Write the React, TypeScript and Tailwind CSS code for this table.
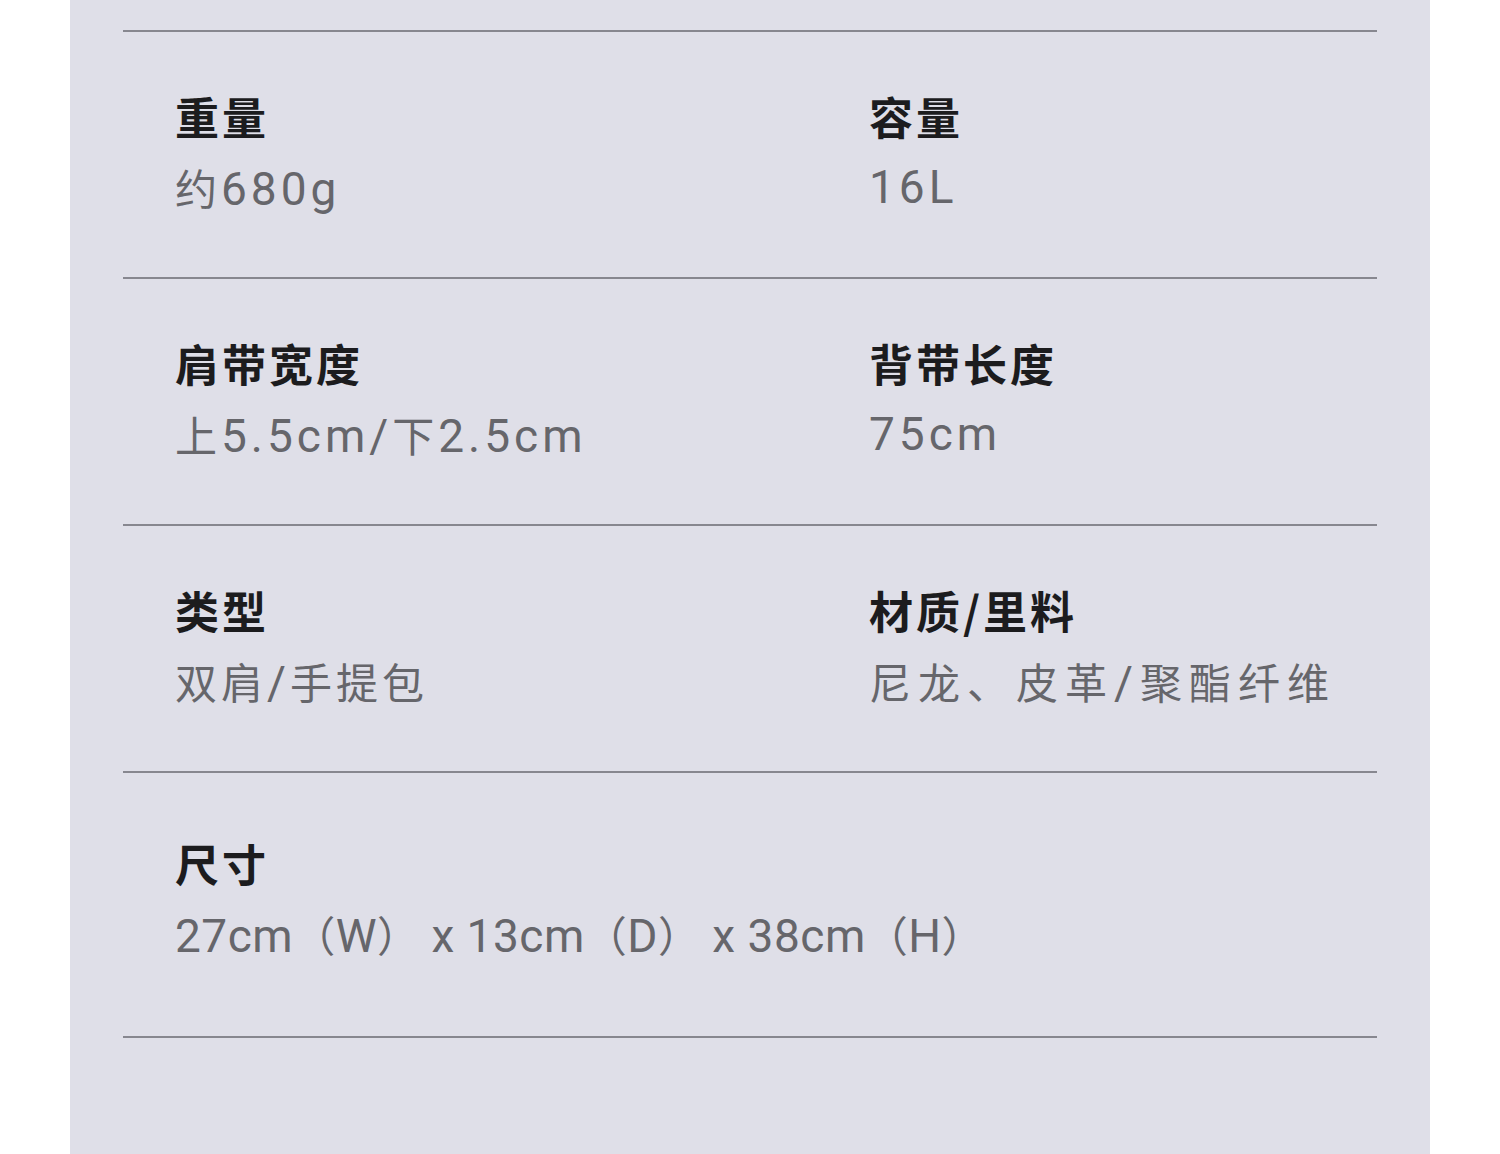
import React from "react";

type Spec = { label: string; value: string; track?: string };

const rows: Spec[][] = [
  [
    { label: "重量", value: "约680g" },
    { label: "容量", value: "16L" },
  ],
  [
    { label: "肩带宽度", value: "上5.5cm/下2.5cm" },
    { label: "背带长度", value: "75cm" },
  ],
  [
    { label: "类型", value: "双肩/手提包" },
    { label: "材质/里料", value: "尼龙、皮革/聚酯纤维", track: "tracking-[7px]" },
  ],
];

const cjk = { fontFamily: '"Noto Sans CJK SC", sans-serif' };
const latin = { fontFamily: 'Roboto, "Noto Sans CJK SC", sans-serif' };

// CJK glyphs sit a little smaller than the digits in the original, so split the runs
function Mixed({ text }: { text: string }) {
  const parts = text.split(/([\u3000-\u9fff\uff00-\uffef]+)/).filter(Boolean);
  return (
    <>
      {parts.map((p, i) =>
        /[\u3000-\u9fff\uff00-\uffef]/.test(p) ? (
          <span key={i} className="text-[42px]" style={cjk}>
            {p}
          </span>
        ) : (
          <span key={i} className="text-[46px]" style={latin}>
            {p}
          </span>
        )
      )}
    </>
  );
}

function Cell({ label, value, track = "tracking-[4px]" }: Spec) {
  return (
    <div className="flex flex-col">
      <span className="text-[44px] leading-[48px] font-bold text-[#1c1c1e] tracking-[3px]" style={cjk}>
        {label}
      </span>
      <span className={`mt-[23px] leading-[48px] text-[#66666b] whitespace-pre ${track}`}>
        <Mixed text={value} />
      </span>
    </div>
  );
}

export default function App() {
  return (
    <div className="min-h-[1154px] w-full bg-white flex justify-center">
      <div className="w-[1360px] bg-[#dfdfe8] px-[53px] pt-[30px] min-h-[1154px]">
        {rows.map((row, i) => (
          <div key={i} className="border-t-2 border-[#87878f] h-[247px] pt-[60px] pl-[52px] grid grid-cols-[694px_1fr]">
            {row.map((c) => (
              <Cell key={c.label} {...c} />
            ))}
          </div>
        ))}
        <div className="border-t-2 border-[#87878f] h-[265px] pt-[66px] pl-[52px]">
          <Cell label="尺寸" value="27cm（W） x 13cm（D） x 38cm（H）" track="tracking-[0.5px]" />
        </div>
        <div className="border-t-2 border-[#87878f]" />
      </div>
    </div>
  );
}
